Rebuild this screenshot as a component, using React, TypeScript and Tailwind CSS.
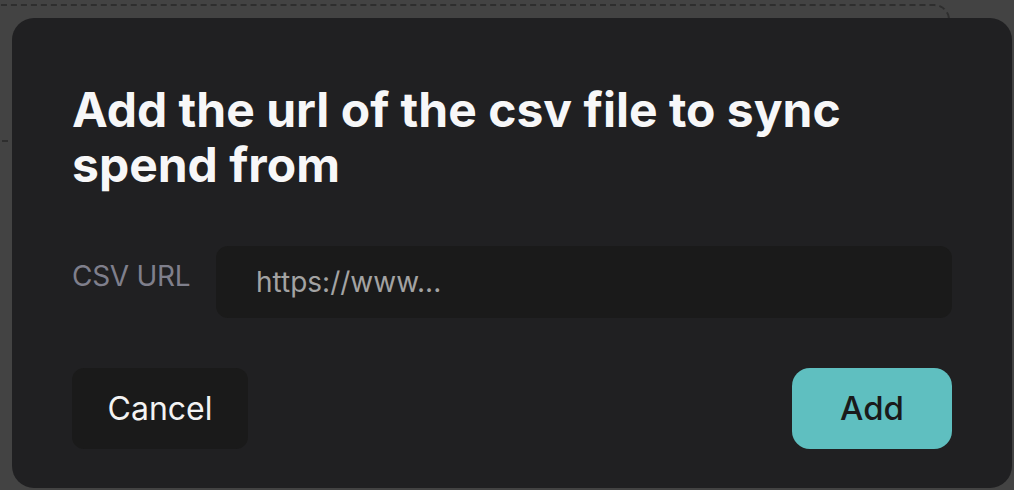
export default function App() {
  return (
    <div className="relative h-[490px] w-[1014px] overflow-hidden bg-[#434343]" style={{ fontFamily: 'Inter, "Noto Sans", sans-serif' }}>
      {/* page behind the dialog */}
      <div className="ml-[-40px] mt-[4px] h-[600px] w-[990px] rounded-tr-[16px] border-2 border-dashed border-[#2e2e2e]">
        <div className="mt-[134px] border-t-2 border-dashed border-[#2e2e2e]" />
      </div>

      {/* dialog */}
      <div className="absolute left-[12px] top-[18px] flex h-[470px] w-[1000px] flex-col rounded-[22px] bg-[#202022] px-[60px] pt-[64px]">
        <h1 className="text-[48px] font-bold leading-[55px] text-[#f7f7f8]">
          Add the url of the csv file to sync spend from
        </h1>
        <div className="mt-[54px] flex items-center gap-[26px]">
          <label className="w-[118px] whitespace-nowrap pb-[12px] text-[28px] tracking-[-0.3px] text-[#7f7f8c]">CSV URL</label>
          <div className="flex h-[72px] flex-1 items-center rounded-[12px] bg-[#1a1a1a] px-[40px] text-[28px] text-[#a3a3a3]">
            https://www...
          </div>
        </div>
        <div className="mt-[50px] flex justify-between">
          <button className="flex h-[81px] w-[176px] items-center justify-center rounded-[12px] bg-[#1a1a1a] text-[32px] text-[#f3f3f3]">
            Cancel
          </button>
          <button className="flex h-[81px] w-[160px] items-center justify-center rounded-[18px] bg-[#5fbfc0] text-[33px] font-medium text-[#1a1a1a]">
            Add
          </button>
        </div>
      </div>
    </div>
  );
}
